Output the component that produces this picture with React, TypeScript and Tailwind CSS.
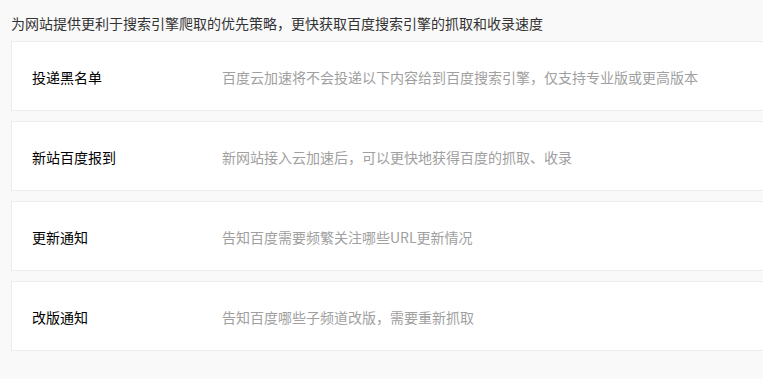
import React from 'react';

const items = [
  { title: '投递黑名单', desc: '百度云加速将不会投递以下内容给到百度搜索引擎，仅支持专业版或更高版本' },
  { title: '新站百度报到', desc: '新网站接入云加速后，可以更快地获得百度的抓取、收录' },
  { title: '更新通知', desc: '告知百度需要频繁关注哪些URL更新情况' },
  { title: '改版通知', desc: '告知百度哪些子频道改版，需要重新抓取' },
];

export default function App() {
  return (
    <div
      className="w-full h-[379px] overflow-hidden bg-[#f9f9f9] pl-[11px] pt-[13px]"
      style={{ fontFamily: '"Noto Sans CJK SC", "Noto Sans", sans-serif' }}
    >
      {/* Intro */}
      <p className="text-[14px] leading-[20px] text-[#333] mb-[8px]">
        为网站提供更利于搜索引擎爬取的优先策略，更快获取百度搜索引擎的抓取和收录速度
      </p>

      {/* Feature list */}
      <div className="flex flex-col gap-[10px] w-[800px]">
        {items.map((item) => (
          <div
            key={item.title}
            className="h-[70px] bg-white border border-[#ececec] flex items-center pl-[20px] pt-[2px]"
          >
            <span className="w-[190px] text-[14px] text-[#000]">{item.title}</span>
            <span className="text-[14px] text-[#a0a0a0]">{item.desc}</span>
          </div>
        ))}
      </div>
    </div>
  );
}
